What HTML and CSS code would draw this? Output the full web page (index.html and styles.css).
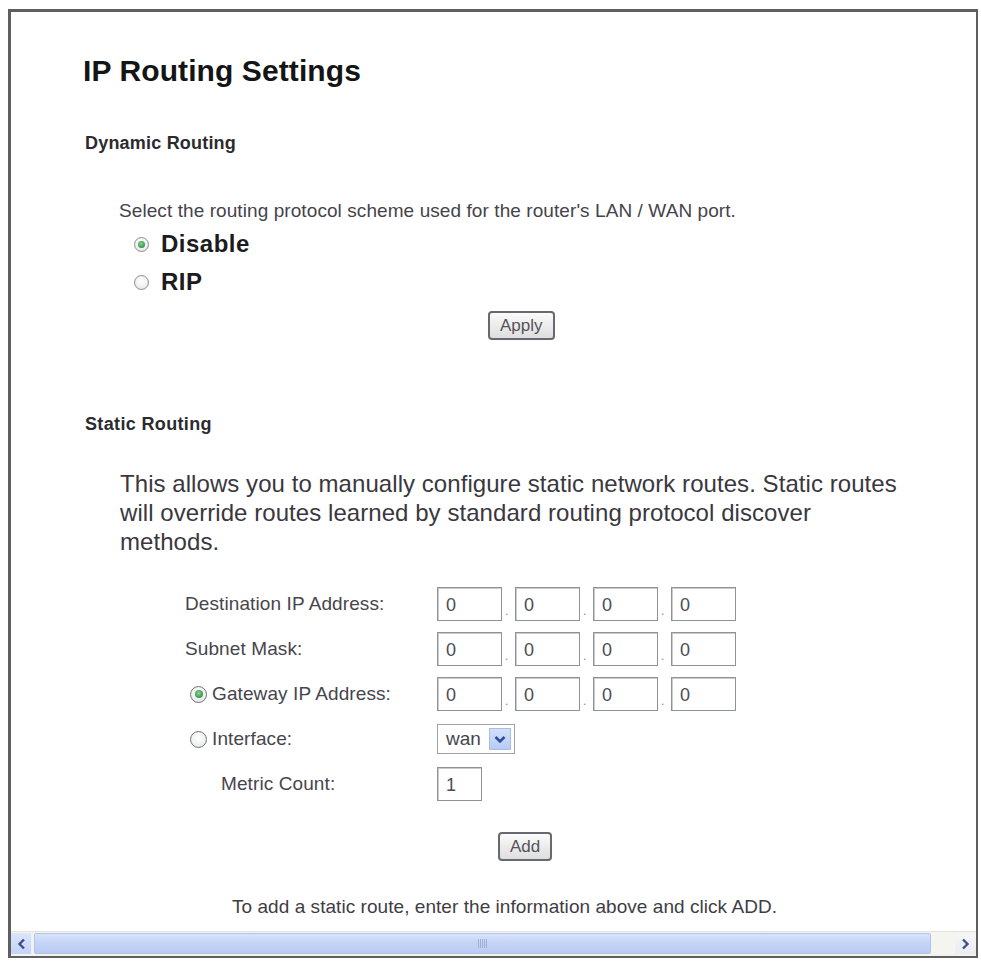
FILE: index.html
```html
<!DOCTYPE html>
<html lang="en">
<head>
<meta charset="utf-8">
<title>IP Routing Settings</title>
<link rel="stylesheet" href="styles.css">
</head>
<body>
<div class="window">
  <div class="content">
    <h1 class="title">IP Routing Settings</h1>
    <h2 class="section">Dynamic Routing</h2>
    <p class="hint">Select the routing protocol scheme used for the router's LAN / WAN port.</p>
    <div class="big-radios">
      <label class="big-radio"><span class="radio checked"></span>Disable</label>
      <label class="big-radio"><span class="radio"></span>RIP</label>
    </div>
    <div class="btn-row apply-row"><button class="btn">Apply</button></div>

    <h2 class="section static">Static Routing</h2>
    <p class="intro">This allows you to manually configure static network routes. Static routes will override routes learned by standard routing protocol discover methods.</p>

    <div class="form">
      <div class="lbl">Destination IP Address:</div>
      <div class="ip"><span class="box">0</span><span class="sep">.</span><span class="box">0</span><span class="sep">.</span><span class="box">0</span><span class="sep">.</span><span class="box">0</span></div>

      <div class="lbl">Subnet Mask:</div>
      <div class="ip"><span class="box">0</span><span class="sep">.</span><span class="box">0</span><span class="sep">.</span><span class="box">0</span><span class="sep">.</span><span class="box">0</span></div>

      <div class="lbl radio-lbl"><span class="radio small checked"></span>Gateway IP Address:</div>
      <div class="ip"><span class="box">0</span><span class="sep">.</span><span class="box">0</span><span class="sep">.</span><span class="box">0</span><span class="sep">.</span><span class="box">0</span></div>

      <div class="lbl radio-lbl"><span class="radio small"></span>Interface:</div>
      <div class="field-cell">
        <div class="select"><span class="select-val">wan</span><span class="select-btn"><svg width="12" height="9" viewBox="0 0 12 9"><path d="M1.5 2 L6 6.5 L10.5 2" fill="none" stroke="#2f4f9a" stroke-width="2.6" stroke-linejoin="miter"/></svg></span></div>
      </div>

      <div class="lbl metric-lbl">Metric Count:</div>
      <div class="field-cell"><span class="box metric">1</span></div>
    </div>

    <div class="btn-row add-row"><button class="btn">Add</button></div>

    <p class="note">To add a static route, enter the information above and click ADD.</p>
  </div>

  <div class="hscroll">
    <span class="sb-btn left"><svg width="9" height="12" viewBox="0 0 9 12"><path d="M7 1.5 L2.5 6 L7 10.5" fill="none" stroke="#3d4f8f" stroke-width="2.4"/></svg></span>
    <span class="thumb"><span class="grip"></span></span>
    <span class="track-rest"></span>
    <span class="sb-btn right"><svg width="9" height="12" viewBox="0 0 9 12"><path d="M2 1.5 L6.5 6 L2 10.5" fill="none" stroke="#3d4f8f" stroke-width="2.4"/></svg></span>
  </div>
</div>
</body>
</html>
```

FILE: styles.css
```css
* { box-sizing: border-box; }

html, body {
  margin: 0;
  padding: 0;
  background: #ffffff;
}

body {
  width: 981px;
  height: 962px;
  overflow: hidden;
  font-family: "Liberation Sans", Arial, sans-serif;
  color: #404048;
}

.window {
  margin: 9px 3px 0 8px;
  height: 949px;
  border: 3px solid #5f5f5f;
  border-right-width: 2px;
  border-bottom-width: 2px;
  display: flex;
  flex-direction: column;
  background: #fff;
}

.content {
  flex: 1;
  padding: 41px 0 0 72px;
}

.title {
  margin: 0;
  font-size: 30px;
  line-height: 36px;
  font-weight: bold;
  color: #151515;
  letter-spacing: 0.1px;
}

.section {
  margin: 43px 0 0 2px;
  font-size: 18px;
  line-height: 22px;
  font-weight: bold;
  color: #2b2b2f;
  letter-spacing: 0.2px;
}

.section.static {
  margin-top: 73px;
  letter-spacing: 0.35px;
}

.hint {
  margin: 46px 0 0 36px;
  font-size: 19px;
  line-height: 22px;
  color: #45434b;
  letter-spacing: 0.08px;
}

.big-radios {
  margin: 3px 0 0 51px;
  display: flex;
  flex-direction: column;
}

.big-radio {
  display: flex;
  align-items: center;
  gap: 12px;
  height: 38px;
  font-size: 24px;
  font-weight: bold;
  color: #1d1b20;
  letter-spacing: 0.5px;
}

.radio {
  width: 15px;
  height: 15px;
  border-radius: 50%;
  border: 1px solid #8a8d90;
  background: radial-gradient(circle at 50% 40%, #ffffff 0%, #f1f1f1 55%, #d9dadb 100%);
  display: inline-flex;
  align-items: center;
  justify-content: center;
  flex: none;
}

.radio.checked::after {
  content: "";
  width: 7px;
  height: 7px;
  border-radius: 50%;
  background: radial-gradient(circle at 45% 40%, #8fd49a 0%, #3f9e52 60%, #2d7d3f 100%);
}

.radio.small {
  width: 17px;
  height: 17px;
  border-color: #6f7378;
}

.radio.small.checked::after {
  width: 8px;
  height: 8px;
}

.btn-row {
  display: flex;
}

.apply-row {
  margin: 10px 0 0 405px;
}

.add-row {
  margin: 31px 0 0 415px;
}

.btn {
  height: 29px;
  padding: 0 10px;
  font-family: "Liberation Sans", Arial, sans-serif;
  font-size: 17px;
  color: #55535b;
  border: 2px solid #666a70;
  border-radius: 4px;
  background: linear-gradient(#fbfbfb, #ececec 50%, #dedede);
  line-height: 25px;
}

.intro {
  margin: 34px 0 0 37px;
  width: 782px;
  font-size: 24px;
  line-height: 29px;
  color: #3a383e;
  letter-spacing: 0.06px;
}

.form {
  margin: 31px 0 0 102px;
  display: grid;
  grid-template-columns: 252px auto;
  grid-auto-rows: 34px;
  row-gap: 11px;
  align-items: center;
}

.lbl {
  font-size: 19px;
  color: #47454d;
  letter-spacing: 0.1px;
  display: flex;
  align-items: center;
  padding-left: 0;
}

.radio-lbl {
  padding-left: 5px;
  gap: 5px;
}

.metric-lbl {
  padding-left: 36px;
}

.ip {
  display: flex;
  align-items: stretch;
  height: 34px;
}

.box {
  width: 65px;
  height: 34px;
  border: 1px solid #8f9296;
  box-shadow: inset 1px 1px 0 #c9cbce;
  padding: 6px 0 0 8px;
  font-size: 18px;
  line-height: 22px;
  color: #4d4b53;
  display: block;
}

.box.metric {
  width: 45px;
}

.sep {
  width: 13px;
  font-size: 12px;
  color: #888;
  display: flex;
  align-items: flex-end;
  padding: 0 0 4px 3px;
  line-height: 12px;
}

.field-cell {
  display: flex;
  align-items: center;
}

.select {
  width: 78px;
  height: 30px;
  border: 1px solid #9fa3a8;
  display: flex;
  align-items: center;
  justify-content: space-between;
  padding: 0 3px 0 8px;
  font-size: 19px;
  color: #47454d;
}

.select-btn {
  width: 22px;
  height: 22px;
  background: linear-gradient(#d2dffa, #b7cbf3);
  border: 1px solid #a9bde6;
  display: flex;
  align-items: center;
  justify-content: center;
}

.note {
  margin: 35px 0 0 149px;
  font-size: 19px;
  line-height: 22px;
  color: #3f3d45;
  letter-spacing: 0.05px;
}

.hscroll {
  height: 25px;
  display: flex;
  background: #f2f3ef;
  border-top: 1px solid #e3e4e0;
  padding: 1px 0 2px;
}

.sb-btn {
  width: 21px;
  display: flex;
  align-items: center;
  justify-content: center;
  flex: none;
}

.sb-btn.left {
  background: linear-gradient(#dbe5fb, #c4d4f6);
  border-right: 1px solid #eef2fc;
}

.sb-btn.right {
  background: linear-gradient(#f6f7f4, #e9ecf2);
}

.thumb {
  flex: 1;
  margin-left: 2px;
  background: linear-gradient(#d8e2fb, #c3d3f6 50%, #bacbf3);
  border: 1px solid #b3c4ec;
  border-radius: 2px;
  display: flex;
  align-items: center;
  justify-content: center;
}

.grip {
  width: 9px;
  height: 9px;
  background: repeating-linear-gradient(90deg, #8e9fcc 0 1px, transparent 1px 2px);
  opacity: 0.7;
}

.track-rest {
  width: 24px;
  flex: none;
  background: #f5f5ef;
}
```
